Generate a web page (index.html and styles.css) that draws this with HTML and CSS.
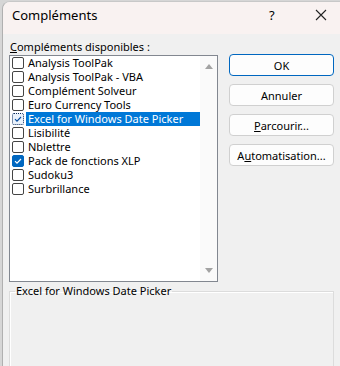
FILE: index.html
```html
<!DOCTYPE html>
<html lang="fr">
<head>
    <meta charset="UTF-8">
    <title>Compléments</title>
    <link rel="stylesheet" href="styles.css">
</head>
<body>
    <div class="window">
        <div class="titlebar">
            <span class="title">Compléments</span>
            <span class="help">?</span>
            <span class="close">
                <svg width="12" height="12" viewBox="0 0 12 12"><path d="M1 1L11 11M11 1L1 11" stroke="#222" stroke-width="1.1" fill="none"/></svg>
            </span>
        </div>
        <div class="content">
            <div class="main">
                <div class="left">
                    <div class="label"><u>C</u>ompléments disponibles :</div>
                    <div class="listbox">
                        <ul class="items">
                            <li><span class="check"></span>Analysis ToolPak</li>
                            <li><span class="check"></span>Analysis ToolPak - VBA</li>
                            <li><span class="check"></span>Complément Solveur</li>
                            <li><span class="check"></span>Euro Currency Tools</li>
                            <li class="selected"><span class="check focus">
                                <svg width="10" height="10" viewBox="0 0 10 10"><path d="M2 5.2L4 7.2L8 3" stroke="#0a4fa0" stroke-width="1.2" fill="none"/></svg>
                            </span><span class="text">Excel for Windows Date Picker</span></li>
                            <li><span class="check"></span>Lisibilité</li>
                            <li><span class="check"></span>Nblettre</li>
                            <li><span class="check checked">
                                <svg width="10" height="10" viewBox="0 0 10 10"><path d="M2 5.2L4 7.2L8 3" stroke="#fff" stroke-width="1.2" fill="none"/></svg>
                            </span>Pack de fonctions XLP</li>
                            <li><span class="check"></span>Sudoku3</li>
                            <li><span class="check"></span>Surbrillance</li>
                        </ul>
                        <div class="scrollbar">
                            <svg width="8" height="5" viewBox="0 0 8 5"><path d="M0 5L4 0L8 5Z" fill="#a3a3a3"/></svg>
                            <svg width="8" height="5" viewBox="0 0 8 5"><path d="M0 0L4 5L8 0Z" fill="#a3a3a3"/></svg>
                        </div>
                    </div>
                </div>
                <div class="buttons">
                    <button class="btn default">OK</button>
                    <button class="btn">Annuler</button>
                    <button class="btn"><u>P</u>arcourir...</button>
                    <button class="btn">A<u>u</u>tomatisation...</button>
                </div>
            </div>
            <fieldset class="details">
                <legend>Excel for Windows Date Picker</legend>
            </fieldset>
        </div>
    </div>
</body>
</html>
```

FILE: styles.css
```css
body {
    margin: 0;
    background-color: #d6d6d6;
    font-family: "Segoe UI", "Noto Sans", "Open Sans", sans-serif;
    font-size: 11px;
    line-height: 14px;
    color: #000;
    overflow: hidden;
}
.window {
    margin: 1px 0 0 2px;
    height: 400px;
    background-color: #f0f0f0;
    border-top: 1px solid #c8c8c8;
    border-left: 1px solid #b0b0b0;
    border-top-left-radius: 8px;
    overflow: hidden;
}
.titlebar {
    height: 26px;
    padding: 0 0 6px 9px;
    background-color: #f9f2f1;
    display: flex;
    align-items: center;
}
.title {
    flex: 1;
    font-size: 13px;
}
.help {
    width: 46px;
    font-size: 13px;
    padding-left: 2px;
}
.close {
    width: 25px;
    display: flex;
    align-items: center;
}
.content {
    padding: 7px 0 0 6px;
}
.main {
    display: flex;
}
.left {
    width: 209px;
}
.label {
    height: 14px;
    padding-left: 1px;
    margin-top: -1px;
    margin-bottom: 1px;
}
.listbox {
    height: 225px;
    background-color: #fff;
    border: 1px solid #828790;
    display: flex;
}
.items {
    list-style: none;
    margin: 0;
    padding: 0 0 0 2px;
    flex: 1;
}
.items li {
    height: 14px;
    display: flex;
    align-items: center;
    white-space: nowrap;
}
.check {
    width: 10px;
    height: 10px;
    border: 1px solid #444;
    border-radius: 2px;
    background-color: #fff;
    margin-right: 4px;
    display: flex;
    align-items: center;
    justify-content: center;
}
.check.checked {
    background-color: #0067c0;
    border-color: #0067c0;
}
.check.focus {
    border: 1px dotted #0a2a5a;
    background-color: #eaf2fb;
}
.selected .text {
    flex: 1;
    margin-left: -2px;
    padding-left: 2px;
    background-color: #0078d7;
    color: #fff;
    height: 14px;
}
.scrollbar {
    width: 17px;
    background-color: #fafafa;
    display: flex;
    flex-direction: column;
    justify-content: space-between;
    align-items: center;
    padding: 8px 0;
}
.buttons {
    margin-left: 11px;
    padding-top: 13px;
    display: flex;
    flex-direction: column;
    gap: 8px;
}
.btn {
    width: 105px;
    height: 22px;
    padding: 0;
    font-family: inherit;
    font-size: 11px;
    color: #000;
    background-color: #fdfdfd;
    border: 1px solid #d0d0d0;
    border-radius: 4px;
}
.btn.default {
    border-color: #0067c0;
}
.details {
    margin: 2px 0 0 0;
    width: 325px;
    height: 100px;
    padding: 0;
    border: 1px solid #dcdcdc;
    box-shadow: inset 1px 1px 0 #fff;
    box-sizing: border-box;
}
.details legend {
    padding: 0 1px;
    margin-left: 5px;
}
```
